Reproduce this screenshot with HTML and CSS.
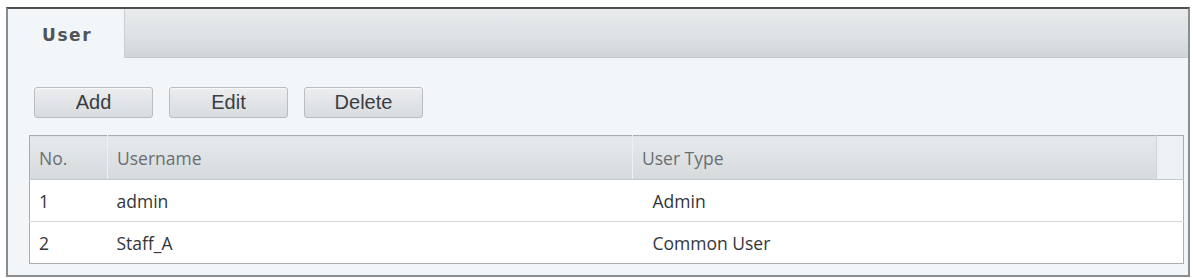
FILE: index.html
```html
<!DOCTYPE html>
<html>
<head>
<meta charset="utf-8">
<link rel="stylesheet" href="styles.css">
</head>
<body>
<div class="panel">
  <div class="tabbar">
    <div class="tab">User</div>
    <div class="tabfill"></div>
  </div>
  <div class="content">
    <div class="toolbar">
      <button class="btn">Add</button>
      <button class="btn">Edit</button>
      <button class="btn">Delete</button>
    </div>
    <table class="grid">
      <thead>
        <tr>
          <th class="c-no">No.</th>
          <th class="c-name">Username</th>
          <th class="c-type">User Type</th>
          <th class="c-pad"></th>
        </tr>
      </thead>
      <tbody>
        <tr>
          <td class="c-no">1</td>
          <td class="c-name">admin</td>
          <td class="c-type val">Admin</td>
          <td class="c-pad"></td>
        </tr>
        <tr>
          <td class="c-no">2</td>
          <td class="c-name">Staff_A</td>
          <td class="c-type val">Common User</td>
          <td class="c-pad"></td>
        </tr>
      </tbody>
    </table>
  </div>
</div>
</body>
</html>
```
FILE: styles.css
```css
html, body {
  margin: 0;
  padding: 0;
  background: #ffffff;
}
body {
  padding: 7px 0 0 6px;
}
.panel {
  box-sizing: border-box;
  width: 1184px;
  height: 270px;
  border: 2px solid #8c8c8c;
  border-top-color: #505050;
  background: #f3f6f8;
  display: flex;
  flex-direction: column;
}
.tabbar {
  display: flex;
  height: 49px;
}
.tab {
  width: 116px;
  background: #f3f6f8;
  font-family: "DejaVu Sans", sans-serif;
  font-weight: bold;
  font-size: 17px;
  letter-spacing: 1.6px;
  color: #505458;
  display: flex;
  align-items: center;
  padding-left: 34px;
  box-sizing: border-box;
  padding-top: 2px;
}
.tabfill {
  flex: 1;
  background: linear-gradient(#e9ebec 0%, #dde2e5 55%, #cfd5d9 100%);
  border-left: 1px solid #c9ced2;
  border-bottom: 1px solid #c3c9cd;
}
.content {
  padding: 29px 5px 0 21px;
}
.toolbar {
  display: flex;
  gap: 16px;
  padding-left: 5px;
}
.btn {
  width: 119px;
  height: 31px;
  box-sizing: border-box;
  border: 1px solid #b9bdc1;
  border-radius: 3px;
  background: linear-gradient(#eceef0, #d8dcdf);
  font-family: "Liberation Sans", Arial, sans-serif;
  font-size: 20px;
  color: #3a3d40;
  padding: 0;
  box-shadow: inset 0 1px 0 #f7f8f9;
}
.grid {
  margin-top: 17px;
  width: 1154px;
  border-collapse: collapse;
  border: 1px solid #a9adb1;
  font-family: "Open Sans", sans-serif;
  font-size: 17.5px;
  table-layout: fixed;
}
.grid th {
  height: 44px;
  background: linear-gradient(#e7eaec, #d5dadd);
  font-weight: normal;
  color: #6a6e72;
  text-align: left;
  padding: 0 0 0 9px;
  border-bottom: 1px solid #c3c7ca;
  border-left: 1px solid #eef0f2;
}
.grid th:first-child {
  border-left: none;
}
.grid th.c-pad {
  background: #eef1f3;
  border-left: 1px solid #d0d4d7;
}
.grid td {
  height: 42px;
  background: #ffffff;
  color: #33363a;
  padding: 0 0 0 9px;
  border-bottom: 1px solid #d6d8da;
}
.grid tr:last-child td {
  border-bottom: none;
}
.grid td.val {
  padding-left: 20px;
}
.c-no { width: 78px; box-sizing: border-box; }
.c-name { width: 525px; box-sizing: border-box; }
.c-type { width: 524px; box-sizing: border-box; }
.c-pad { width: 27px; box-sizing: border-box; }
```
